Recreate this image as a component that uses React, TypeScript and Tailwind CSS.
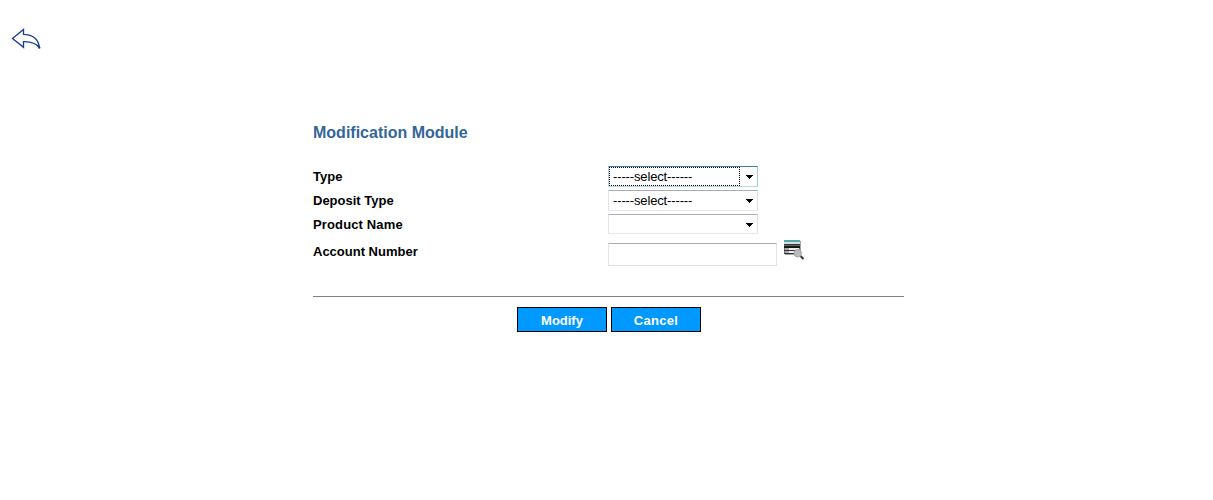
import { useState } from "react";

function BackIcon() {
  return (
    <svg width="31" height="22" viewBox="0 0 31 22" fill="none" className="block">
      <path
        d="M1.5 10.5 L12.5 1.5 V6.3 C21 6.5 27.5 10.5 28.5 20 C25.5 15.5 21 13.5 12.5 13.7 V19.3 Z"
        stroke="#1c3f8c"
        strokeWidth="1.35"
      />
      <path d="M27.5 18 L28.7 20.5" stroke="#1c3f8c" strokeWidth="2" />
    </svg>
  );
}

function LookupIcon() {
  return (
    <svg width="21" height="21" viewBox="0 0 21 21" className="block">
      <rect x="1" y="1" width="16" height="14" fill="#a3a3a3" />
      <rect x="0" y="0" width="16" height="2" fill="#55a9ac" />
      <rect x="0" y="2" width="16" height="2" fill="#d3dede" />
      <rect x="0" y="4" width="16" height="10" fill="#777" />
      <rect x="0" y="4" width="16" height="1" fill="#333" />
      <rect x="1" y="5" width="14" height="1" fill="#666" />
      <rect x="0" y="6" width="16" height="2" fill="#151515" />
      <rect x="1" y="8" width="4" height="2" fill="#aaa" />
      <rect x="5" y="8" width="10" height="2" fill="#eee" />
      <rect x="0" y="10" width="16" height="1" fill="#333" />
      <rect x="1" y="11" width="4" height="2" fill="#aaa" />
      <rect x="5" y="11" width="10" height="2" fill="#eee" />
      <rect x="0" y="13" width="11" height="1" fill="#333" />
      <path d="M16.5 16 L19.5 19" stroke="#333" strokeWidth="2" />
      <circle cx="13.7" cy="13.2" r="3.7" fill="#bcbcbc" stroke="#a2a2a2" />
    </svg>
  );
}

interface SelectBoxProps {
  text: string;
  focused?: boolean;
  className: string;
}

function SelectBox({ text, focused, className }: SelectBoxProps) {
  const border = focused
    ? "border-t-[#3d7bad] border-l-[#b5cfe7] border-r-[#a4c9e3] border-b-[#b7d9ed]"
    : "border-t-[#abadb3] border-l-[#e2e3ea] border-r-[#dbdfe6] border-b-[#e3e9ef]";
  return (
    <button type="button" className={`flex w-[150px] rounded-[1px] border bg-white text-left ${border} ${className}`}>
      <span
        className={`h-full w-[131px] border border-dotted pl-[3px] text-[13px] leading-[17px] tracking-[-0.14px] whitespace-pre ${
          focused ? "border-black" : "border-transparent"
        }`}
      >
        {text}
      </span>
      <svg width="17" height="19" viewBox="0 0 17 19" className="block" shapeRendering="crispEdges">
        <path d="M6 8h7v1h-1v1h-1v1h-1v1h-1v-1h-1v-1h-1v-1h-1z" fill="#000" />
      </svg>
    </button>
  );
}

export default function App() {
  const [account, setAccount] = useState("");
  return (
    <main className="h-[500px] w-full bg-white font-['Liberation_Sans',Arial,sans-serif] text-black">
      <div className="h-[123px] pt-[28px] pl-[11px]">
        <BackIcon />
      </div>
      <form className="ml-[313px] w-[591px]">
        <h1 className="h-[43px] text-[16px] leading-[20px] font-bold text-[#336699]">Modification Module</h1>
        <div className="grid grid-cols-[295px_1fr] text-[13px] leading-[21px] font-bold">
          <div className="h-6">Type</div>
          <SelectBox text="-----select------" focused className="h-[21px] font-normal" />
          <div className="h-6">Deposit Type</div>
          <SelectBox text="-----select------" className="h-[21px] font-normal" />
          <div className="h-6 tracking-[0.14px]">Product Name</div>
          <SelectBox text="" className="h-[20px] font-normal" />
          <div className="h-[58px] pt-[3px]">Account Number</div>
          <div className="flex gap-[7px]">
            <input
              type="text"
              aria-label="Account Number"
              value={account}
              onChange={(e) => setAccount(e.target.value)}
              className="mt-[5px] h-[23px] w-[169px] rounded-[1px] border border-[#e2e3ea] border-t-[#abadb3] px-1 font-normal outline-none"
            />
            <div className="pt-[2px]">
              <LookupIcon />
            </div>
          </div>
        </div>
        <div className="h-px bg-[#808080]" />
        <div className="mt-[10px] flex gap-1 pl-[204px]">
          <button type="button" className="h-[25px] w-[90px] border border-black bg-[#0099ff] pt-[2px] text-[13px] leading-[21px] font-bold text-white">
            Modify
          </button>
          <button type="button" className="h-[25px] w-[90px] border border-black bg-[#0099ff] pt-[2px] text-[13px] leading-[21px] font-bold tracking-[0.3px] text-white">
            Cancel
          </button>
        </div>
      </form>
    </main>
  );
}
